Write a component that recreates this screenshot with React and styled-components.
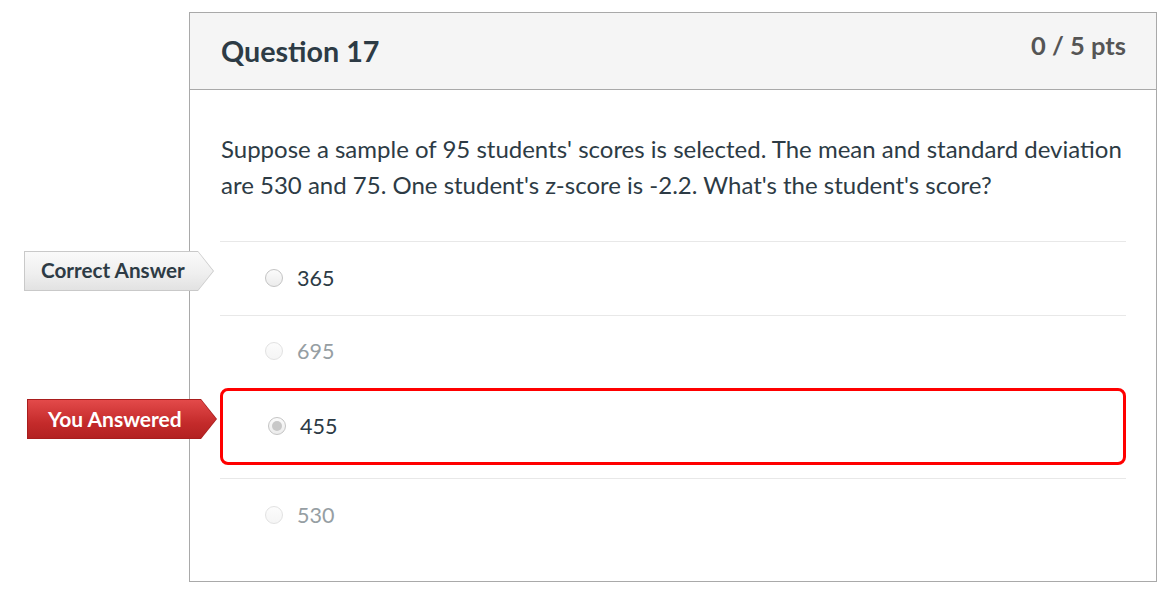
import React from 'react'
import styled, { createGlobalStyle } from 'styled-components'

const GlobalStyle = createGlobalStyle`
  body {
    margin: 0;
    background: #ffffff;
    font-family: Lato, "Liberation Sans", sans-serif;
    color: #2d3b45;
  }
`

/* 整個頁面 */
const Page = styled.div`
  padding: 12px 0 0 189px;
`

/* 題目卡片 */
const Card = styled.div`
  width: 968px;
  height: 570px;
  box-sizing: border-box;
  border: 1px solid #a9a9a9;
`

/* 卡片標頭 */
const Header = styled.div`
  height: 77px;
  box-sizing: border-box;
  display: flex;
  justify-content: space-between;
  align-items: flex-start;
  padding: 0 30px 0 31px;
  background: #f5f5f5;
  border-bottom: 1px solid #a9a9a9;
`

const Title = styled.h2`
  margin: 21px 0 0;
  font-size: 28.7px;
  line-height: 35px;
  font-weight: 700;
  color: #2d3b45;
`

const Points = styled.div`
  margin-top: 17px;
  font-size: 25.5px;
  line-height: 30px;
  font-weight: 700;
  color: #555555;
`

/* 卡片內容 */
const Body = styled.div`
  padding: 41px 30px 0 31px;
`

const QuestionText = styled.p`
  margin: 0 0 38px;
  font-size: 24px;
  line-height: 36px;
  color: #2d3b45;
`

const Answers = styled.div`
  margin-left: -1px;
  display: flex;
  flex-direction: column;
`

/* 一個選項 */
const AnswerRow = styled.div`
  position: relative;
  height: ${(p) => p.$h}px;
  display: flex;
  align-items: center;
  padding-left: 45px;
  padding-bottom: 2px;
  box-sizing: border-box;
  border-top: 1px solid #e8e8e8;
`

/* 使用者選的選項（紅框） */
const SelectedRow = styled.div`
  position: relative;
  height: 77px;
  box-sizing: border-box;
  display: flex;
  align-items: center;
  padding-left: 45px;
  padding-bottom: 2px;
  border: 3px solid #ff0000;
  border-radius: 8px;
  margin-bottom: 13px;
`

const Radio = styled.span`
  width: 18px;
  height: 18px;
  box-sizing: border-box;
  border-radius: 50%;
  border: 1px solid ${(p) => (p.$faded ? '#e2e2e2' : '#c4c4c4')};
  background: ${(p) =>
    p.$faded
      ? 'linear-gradient(#fcfcfc, #f5f5f5)'
      : 'linear-gradient(#fbfbfb, #ececec)'};
  display: flex;
  align-items: center;
  justify-content: center;
  margin-right: 14px;
  flex-shrink: 0;
`

const RadioDot = styled.span`
  width: 10px;
  height: 10px;
  border-radius: 50%;
  background: #c8c8c8;
`

const AnswerText = styled.span`
  font-size: 21.5px;
  line-height: 26px;
  color: ${(p) => (p.$faded ? '#969ea3' : '#2d3b45')};
`

/* 左側標籤（箭頭形狀） */
const Flag = styled.div`
  position: absolute;
  left: -196px;
  top: ${(p) => p.$top}px;
  width: 190px;
  height: 40px;
  padding: 1px;
  box-sizing: border-box;
  background: ${(p) => (p.$red ? '#a81d1d' : '#c9c9c9')};
  clip-path: polygon(0 0, 174px 0, 190px 50%, 174px 100%, 0 100%);
`

const FlagInner = styled.div`
  height: 100%;
  display: flex;
  align-items: center;
  padding-left: ${(p) => (p.$red ? 20 : 16)}px;
  padding-bottom: 2px;
  box-sizing: border-box;
  background: ${(p) =>
    p.$red
      ? 'linear-gradient(#e34a4a, #c42b2b 60%, #b32121)'
      : 'linear-gradient(#fafafa, #eeeeee 60%, #e2e2e2)'};
  clip-path: polygon(0 0, 173px 0, 188px 50%, 173px 100%, 0 100%);
  font-size: ${(p) => (p.$red ? 21 : 20.7)}px;
  font-weight: 700;
  color: ${(p) => (p.$red ? '#ffffff' : '#2d3b45')};
  white-space: nowrap;
`

const answers = [
  { value: '365', correct: true },
  { value: '695', faded: true },
  { value: '455', selected: true },
  { value: '530', faded: true },
]

export default function App() {
  return (
    <>
      <GlobalStyle />
      <Page>
        <Card>
          <Header>
            <Title>Question 17</Title>
            <Points>0 / 5 pts</Points>
          </Header>
          <Body>
            <QuestionText>
              Suppose a sample of 95 students' scores is selected. The mean and
              standard deviation are 530 and 75. One student's z-score is -2.2.
              What's the student's score?
            </QuestionText>
            <Answers>
              {answers.map((a, i) =>
                a.selected ? (
                  <SelectedRow key={a.value}>
                    <Flag $red $top={8}>
                      <FlagInner $red>You Answered</FlagInner>
                    </Flag>
                    <Radio>
                      <RadioDot />
                    </Radio>
                    <AnswerText>{a.value}</AnswerText>
                  </SelectedRow>
                ) : (
                  <AnswerRow key={a.value} $h={i === 1 ? 73 : 74}>
                    {a.correct && (
                      <Flag $top={9}>
                        <FlagInner>Correct Answer</FlagInner>
                      </Flag>
                    )}
                    <Radio $faded={a.faded} />
                    <AnswerText $faded={a.faded}>{a.value}</AnswerText>
                  </AnswerRow>
                )
              )}
            </Answers>
          </Body>
        </Card>
      </Page>
    </>
  )
}
